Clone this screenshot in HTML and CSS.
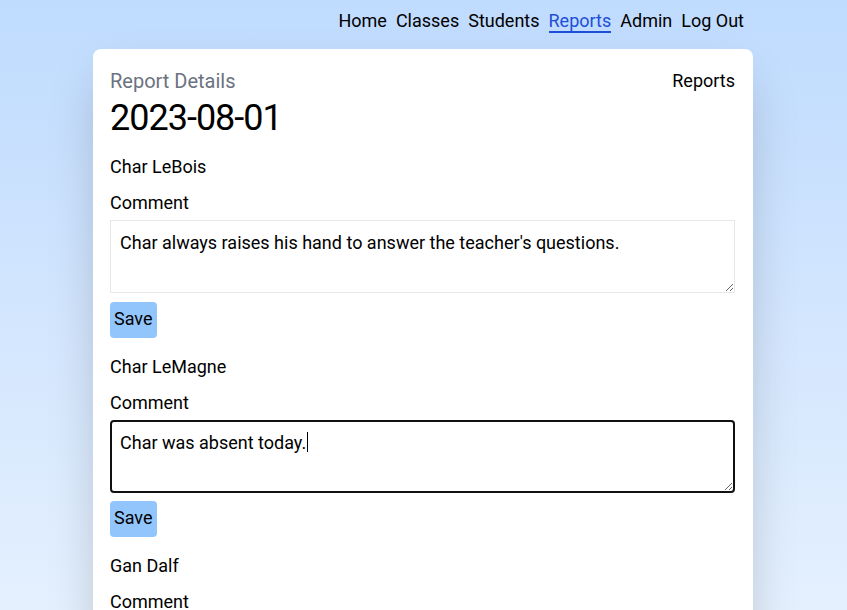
FILE: index.html
```html
<!DOCTYPE html>
<html lang="en">
<head>
<meta charset="utf-8">
<title>Report Details</title>
<link rel="stylesheet" href="styles.css">
</head>
<body>
<header class="topbar">
  <nav class="nav">
    <a class="nav-link" href="#">Home</a>
    <a class="nav-link" href="#">Classes</a>
    <a class="nav-link" href="#">Students</a>
    <a class="nav-link active" href="#">Reports</a>
    <a class="nav-link" href="#">Admin</a>
    <a class="nav-link" href="#">Log Out</a>
  </nav>
</header>
<main class="card">
  <div class="card-head">
    <div>
      <div class="subtitle">Report Details</div>
      <h1 class="date">2023-08-01</h1>
    </div>
    <a class="back" href="#">Reports</a>
  </div>

  <section class="entry">
    <p class="student">Char LeBois</p>
    <label class="label">Comment</label>
    <textarea class="comment" rows="2">Char always raises his hand to answer the teacher's questions.</textarea>
    <button class="save">Save</button>
  </section>

  <section class="entry">
    <p class="student">Char LeMagne</p>
    <label class="label">Comment</label>
    <div class="field">
      <textarea class="comment focused" rows="2">Char was absent today.</textarea>
      <span class="caret"></span>
    </div>
    <button class="save">Save</button>
  </section>

  <section class="entry">
    <p class="student">Gan Dalf</p>
    <label class="label">Comment</label>
    <textarea class="comment" rows="2"></textarea>
    <button class="save">Save</button>
  </section>
</main>
</body>
</html>
```
FILE: styles.css
```css
html {
  background: linear-gradient(to bottom, #bfdbfe 0px, #eaf3fe 700px) no-repeat;
  background-color: #eaf3fe;
  min-height: 100%;
}
body {
  margin: 0;
  font-family: Roboto, "Liberation Sans", sans-serif;
  font-size: 18px;
  line-height: 28px;
  color: #000;
}
.topbar {
  display: flex;
  justify-content: flex-end;
  padding: 10px 103px 16px 0;
}
.nav {
  display: flex;
  gap: 9px;
}
.nav-link {
  display: block;
  line-height: 21px;
  color: #000;
  text-decoration: none;
  border-bottom: 2px solid transparent;
}
.nav-link.active {
  color: #1d4ed8;
  border-bottom-color: #1d4ed8;
}
.card {
  margin: 0 0 0 93px;
  background: #fff;
  border-radius: 8px;
  padding: 18px 18px 17px 17px;
  width: 625px;
  box-shadow: 0 25px 50px -12px rgba(0, 0, 0, 0.25);
}
.card-head {
  display: flex;
  justify-content: space-between;
  align-items: flex-start;
}
.subtitle {
  font-size: 20px;
  line-height: 28px;
  color: #6b7280;
}
.date {
  margin: 3px 0 0 0;
  font-size: 36px;
  line-height: 40px;
  font-weight: 400;
  letter-spacing: -1px;
}
.back {
  color: #000;
  text-decoration: none;
}
.entry {
  display: flex;
  flex-direction: column;
  align-items: flex-start;
  margin-top: 15px;
}
.entry + .entry {
  margin-top: 15px;
}
.student {
  margin: 0;
}
.label {
  margin-top: 8px;
}
.field {
  position: relative;
  width: 100%;
  margin-top: 3px;
}
.field .comment {
  margin-top: 0;
  display: block;
}
.field + .save {
  margin-top: 8px;
}
.comment {
  box-sizing: border-box;
  width: 100%;
  height: 73px;
  margin-top: 3px;
  padding: 8px 9px;
  border: 1px solid #e5e7eb;
  border-radius: 0;
  font: inherit;
  color: #000;
  background: #fff;
  outline: none;
}
.comment.focused {
  border: 2px solid #111;
  border-radius: 4px;
  padding: 7px 8px;
}
.caret {
  position: absolute;
  left: 197px;
  top: 12px;
  width: 1px;
  height: 20px;
  background: #000;
}
.save {
  margin-top: 9px;
  padding: 3px 4px 5px;
  border: 0;
  border-radius: 4px;
  background: #93c5fd;
  font: inherit;
  color: #000;
}
```
